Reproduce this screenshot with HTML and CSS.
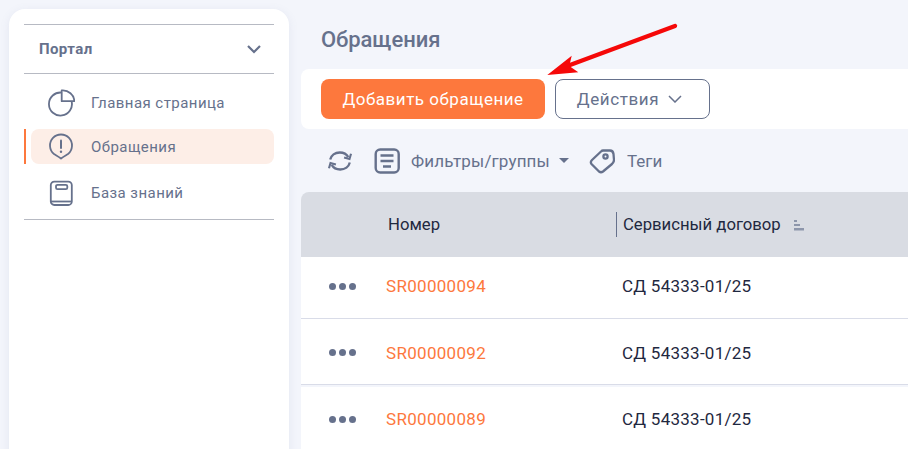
FILE: index.html
```html
<!DOCTYPE html>
<html lang="ru">
<head>
<meta charset="utf-8">
<title>Обращения</title>
<link rel="stylesheet" href="styles.css">
</head>
<body>
<div class="page">
  <aside class="sidebar">
    <div class="section-head">
      <span class="section-title">Портал</span>
      <svg class="chev" width="16" height="10" viewBox="0 0 16 10"><path d="M2 2l6 6 6-6" fill="none" stroke="#66718c" stroke-width="2.2"/></svg>
    </div>
    <nav class="nav">
      <div class="nav-item">
        <svg class="nav-icon" width="28" height="28" viewBox="0 0 28 28" fill="none" stroke="#66718c" stroke-width="1.8" stroke-linejoin="round"><path d="M14.700 3.600A11.500 11.500 0 1 0 24.600 12.200"/><path d="M14.700 1.500V12.200H27.300A11.500 11 0 0 0 14.700 1.500z"/></svg>
        <span>Главная страница</span>
      </div>
      <div class="nav-item active">
        <svg class="nav-icon" width="28" height="28" viewBox="0 0 28 28" fill="none" stroke="#66718c" stroke-width="1.800" stroke-linejoin="round"><path d="M14 25.500C12 23.800 10 22.800 7 21A11 11 0 1 1 21 21C18 22.800 16 23.800 14 25.500z"/><path d="M14 7.500v7.500" stroke-linecap="round" stroke-width="2"/><circle cx="14" cy="18.800" r="1.200" fill="#66718c" stroke="none"/></svg>
        <span>Обращения</span>
      </div>
      <div class="nav-item">
        <svg class="nav-icon" width="28" height="28" viewBox="0 0 28 28" fill="none" stroke="#66718c" stroke-width="1.800"><rect x="3.800" y="2.600" width="21" height="23.400" rx="3.500"/><path d="M3.800 22.500h21"/><rect x="9" y="5.800" width="11.300" height="4.400" rx="1.500"/></svg>
        <span>База знаний</span>
      </div>
    </nav>
  </aside>
  <main class="main">
    <h1 class="title">Обращения</h1>
    <div class="actions">
      <button class="btn-primary">Добавить обращение</button>
      <button class="btn-outline">Действия
        <svg width="14" height="8" viewBox="0 0 14 8"><path d="M1 1l6 6 6-6" fill="none" stroke="#66718c" stroke-width="1.500"/></svg>
      </button>
    </div>
    <div class="tools">
      <svg class="refresh" width="26" height="26" viewBox="0 0 26 26" fill="none" stroke="#66718c" stroke-width="2.300"><path d="M3.200 11.500C4.200 7.300 8 4.500 12.800 4.500c3.700 0 6.800 1.600 8.500 4.600"/><path d="M24 5.800l-1.500 5.200-5.400-1.600" stroke-width="2.100"/><path d="M22.800 14.500c-1 4.200-4.800 7-9.600 7-3.700 0-6.800-1.600-8.500-4.600"/><path d="M2 20.200L3.500 15l5.400 1.600" stroke-width="2.100"/></svg>
      <svg class="filter" width="26" height="26" viewBox="0 0 26 26" fill="none" stroke="#66718c" stroke-width="2.400"><rect x="1.700" y="1.500" width="23" height="23" rx="4.500"/><path d="M6.500 7.500h13M6.500 13h13M9 18.500h8"/></svg>
      <span class="tool-label filter-label">Фильтры/группы</span>
      <span class="caret"></span>
      <svg class="tag" width="26" height="26" viewBox="0 0 26 26" fill="none" stroke="#66718c" stroke-width="2.300" stroke-linejoin="round"><path d="M14 2.500H21Q24 2.500 24.500 6L25 12Q25 14 23 16L14 23.500Q12 25 10 23.500L2.500 16Q1 14 3 12L12 3.500Q13 2.500 14 2.500z"/><circle cx="16.500" cy="8.500" r="2.100"/></svg>
      <span class="tool-label tag-label">Теги</span>
    </div>
    <div class="table">
      <div class="row head">
        <div class="c-menu"></div>
        <div class="c-num head-num">Номер</div>
        <div class="c-contract head-contract">Сервисный договор
          <svg class="sort" width="12" height="12" viewBox="0 0 12 12" fill="#8d96ab"><rect x="1" y="1" width="3" height="2"/><rect x="1" y="5" width="6" height="2"/><rect x="1" y="9" width="10" height="2.500"/></svg>
        </div>
      </div>
      <div class="row r1">
        <div class="c-menu"><i></i><i></i><i></i></div>
        <div class="c-num link">SR00000094</div>
        <div class="c-contract">СД 54333-01/25</div>
      </div>
      <div class="row r2">
        <div class="c-menu"><i></i><i></i><i></i></div>
        <div class="c-num link">SR00000092</div>
        <div class="c-contract">СД 54333-01/25</div>
      </div>
      <div class="row r3">
        <div class="c-menu"><i></i><i></i><i></i></div>
        <div class="c-num link">SR00000089</div>
        <div class="c-contract">СД 54333-01/25</div>
      </div>
    </div>
  </main>
</div>
<svg class="arrow" width="145" height="70" viewBox="0 0 145 70"><path d="M30 50L135 11" fill="none" stroke="#f50808" stroke-width="4.200" stroke-linecap="round"/><path d="M7.300 60L31.700 40.700 29.300 51 38.300 57.300z" fill="#f50808"/></svg>
</body>
</html>
```

FILE: styles.css
```css
* { box-sizing: border-box; }
html, body { margin: 0; height: 100%; overflow: hidden; }
body {
  background: #f3f5fb;
  font-family: Roboto, "Liberation Sans", sans-serif;
  color: #66718c;
  position: relative;
}
.page { display: flex; height: 449px; padding-left: 9px; gap: 12px; }
.sidebar {
  width: 280px;
  height: 460px;
  margin-top: 9px;
  background: #fff;
  border-radius: 16px;
  padding: 15px 15px 0;
  box-shadow: 0 2px 10px rgba(120,130,170,.12);
  flex: none;
}
.section-head {
  display: flex;
  align-items: center;
  justify-content: space-between;
  height: 50px;
  padding: 0 12px 0 15px;
  border-top: 1px solid #b7bac3;
  border-bottom: 1px solid #b7bac3;
}
.section-title { font-size: 15px; font-weight: 700; letter-spacing: .4px; }
.nav {
  height: 146px;
  border-bottom: 1px solid #b7bac3;
  padding: 11px 0 0 7px;
  display: flex;
  flex-direction: column;
  gap: 10px;
}
.nav-item {
  display: flex;
  align-items: center;
  height: 35px;
  padding-left: 16px;
  font-size: 15px;
  letter-spacing: .45px;
  border-radius: 8px;
  position: relative;
  flex: none;
}
.nav-icon { margin-right: 16px; flex: none; }
.nav-item.active {
  background: #fdeee7;
  margin: -1px 0 1px;
  padding-top: 1px;
}
.nav-item.active::before {
  content: "";
  position: absolute;
  left: -7px;
  top: 0;
  width: 2px;
  height: 35px;
  background: #fd783d;
}
.main { flex: 1; min-width: 0; }
.title {
  margin: 27px 0 0 20px;
  font-size: 22px;
  line-height: 26px;
  font-weight: 500;
  color: #66718c;
  letter-spacing: -.05px;
}
.actions {
  display: flex;
  gap: 10px;
  margin-top: 16px;
  height: 60px;
  padding: 10px 20px;
  background: #fff;
  border-radius: 8px 0 0 8px;
}
.btn-primary {
  width: 224px;
  height: 40px;
  border: 0;
  border-radius: 8px;
  background: #fd783d;
  color: #fff;
  font: 400 17px Roboto, sans-serif;
  letter-spacing: .52px;
}
.btn-outline {
  width: 155px;
  height: 40px;
  border: 1px solid #66718c;
  border-radius: 8px;
  background: #fff;
  color: #66718c;
  font: 400 17px Roboto, sans-serif;
  letter-spacing: .6px;
  display: flex;
  align-items: center;
  justify-content: center;
  gap: 9px;
  padding: 0 6px 0 0;
}
.tools {
  display: flex;
  align-items: center;
  height: 63px;
  padding-left: 26px;
}
.filter { margin-left: 21px; }
.tool-label { font-size: 17px; }
.filter-label { margin-left: 11px; letter-spacing: .15px; }
.caret {
  margin-left: 9px;
  border-left: 5px solid transparent;
  border-right: 5px solid transparent;
  border-top: 5px solid #66718c;
}
.tag { margin-left: 20px; }
.tag-label { margin-left: 12px; }
.table { color: #1f2840; font-size: 17px; letter-spacing: .26px; }
.row { display: flex; align-items: center; background: #fff; border-bottom: 1px solid #d9dce8; }
.row.head {
  height: 65px;
  background: #d9dce3;
  border: 0;
  border-radius: 8px 0 0 0;
  font-size: 16.700px;
  letter-spacing: 0;
}
.r1 { height: 62px; padding-bottom: 3px; }
.r2 { height: 66px; padding-top: 2px; }
.r3 { height: 64px; margin-top: 2px; border-bottom: 0; }
.c-menu { width: 85px; padding-left: 28px; display: flex; gap: 3px; flex: none; }
.c-menu i { width: 7px; height: 7px; border-radius: 50%; background: #66718c; }
.c-num { width: 236px; flex: none; }
.head-num { padding-left: 2px; width: 230px; }
.link { color: #fd783d; letter-spacing: .3px; }
.head-contract {
  border-left: 1px solid #66718c;
  height: 25px;
  line-height: 25px;
  padding-left: 6px;
  display: flex;
  align-items: center;
  gap: 12px;
}
.arrow { position: absolute; left: 540px; top: 15px; }
```
